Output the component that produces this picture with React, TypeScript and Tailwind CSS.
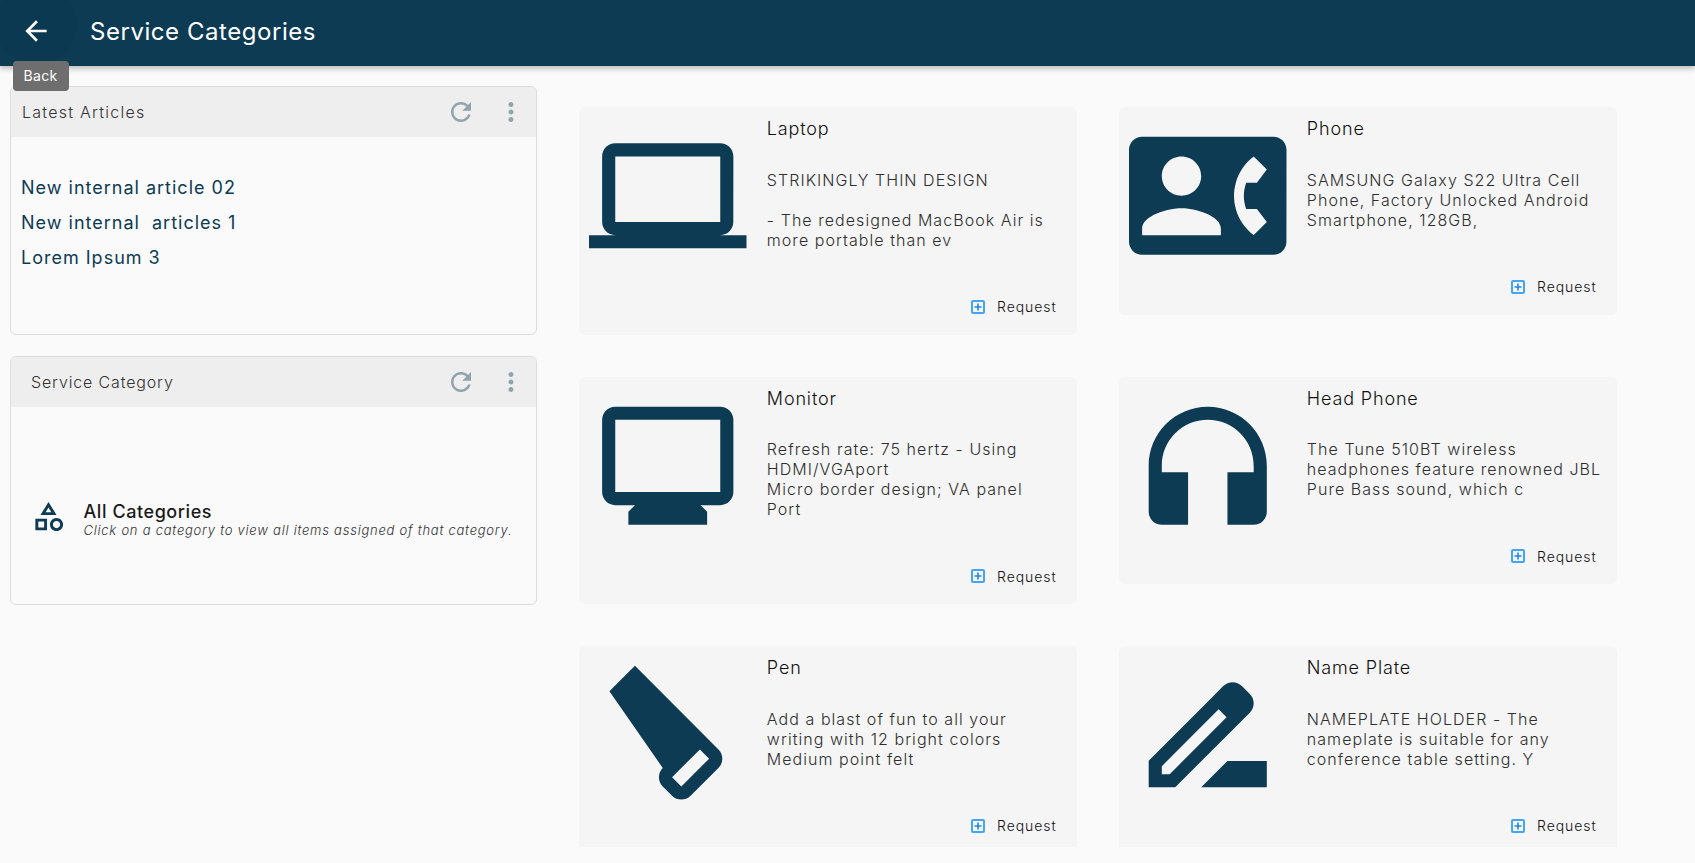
import React from 'react';

const icons: Record<string, string> = {
  laptop:
    'M20 18c1.1 0 1.99-.9 1.99-2L22 6c0-1.1-.9-2-2-2H4c-1.1 0-2 .9-2 2v10c0 1.1.9 2 2 2H0v2h24v-2h-4zM4 6h16v10H4V6z',
  phone:
    'M22 3H2C.9 3 0 3.9 0 5v14c0 1.1.9 2 2 2h20c1.1 0 1.99-.9 1.99-2L24 5c0-1.1-.9-2-2-2zM8 6c1.66 0 3 1.34 3 3s-1.34 3-3 3-3-1.34-3-3 1.34-3 3-3zm6 12H2v-1c0-2 4-3.1 6-3.1s6 1.1 6 3.1v1zm3.85-4h1.64L21 16l-1.99 1.99c-1.31-.98-2.28-2.38-2.73-3.99-.18-.64-.28-1.31-.28-2s.1-1.36.28-2c.45-1.62 1.42-3.01 2.73-3.99L21 8l-1.51 2h-1.64c-.22.63-.35 1.3-.35 2s.13 1.37.35 2z',
  monitor:
    'M20 3H4c-1.1 0-2 .9-2 2v11c0 1.1.9 2 2 2h3l-1 1v2h12v-2l-1-1h3c1.1 0 2-.9 2-2V5c0-1.1-.9-2-2-2zm0 13H4V5h16v11z',
  headphones:
    'M12 3c-4.97 0-9 4.03-9 9v7c0 1.1.9 2 2 2h4v-8H5v-1c0-3.87 3.13-7 7-7s7 3.13 7 7v1h-4v8h4c1.1 0 2-.9 2-2v-7c0-4.97-4.03-9-9-9z',
  carpenter:
    'M19.73 14.23L7 1.5 3.11 5.39l8.13 11.67c-.78.78-.78 2.05 0 2.83l1.41 1.41c.78.78 2.05.78 2.83 0l4.24-4.24c.79-.78.79-2.05.01-2.83zm-5.66 5.65l-1.41-1.41 4.24-4.24 1.41 1.41-4.24 4.24z',
  rename:
    'M18.41 5.8L17.2 4.59c-.78-.78-2.05-.78-2.83 0l-2.68 2.68L3 15.96V20h4.04l8.74-8.74 2.63-2.63c.79-.78.79-2.05 0-2.83zM6.21 18H5v-1.21l8.66-8.66 1.21 1.21L6.21 18zM11 20l4-4h6v4H11z',
  category:
    'M12 2l-5.5 9h11L12 2zm0 3.84L13.93 9h-3.87L12 5.84zM17.5 13c-2.49 0-4.5 2.01-4.5 4.5s2.01 4.5 4.5 4.5 4.5-2.01 4.5-4.5-2.01-4.5-4.5-4.5zm0 7c-1.38 0-2.5-1.12-2.5-2.5s1.12-2.5 2.5-2.5 2.5 1.12 2.5 2.5-1.12 2.5-2.5 2.5zM3 21.5h8v-8H3v8zm2-6h4v4H5v-4z',
  back: 'M20 11H7.83l5.59-5.59L12 4l-8 8 8 8 1.41-1.41L7.83 13H20v-2z',
  refresh:
    'M17.65 6.35C16.2 4.9 14.21 4 12 4c-4.42 0-7.99 3.58-7.99 8s3.57 8 7.99 8c3.73 0 6.84-2.55 7.73-6h-2.08c-.82 2.33-3.04 4-5.65 4-3.31 0-6-2.69-6-6s2.69-6 6-6c1.66 0 3.14.69 4.22 1.78L13 11h7V4l-2.35 2.35z',
  more: 'M12 8c1.1 0 2-.9 2-2s-.9-2-2-2-2 .9-2 2 .9 2 2 2zm0 2c-1.1 0-2 .9-2 2s.9 2 2 2 2-.9 2-2-.9-2-2-2zm0 6c-1.1 0-2 .9-2 2s.9 2 2 2 2-.9 2-2-.9-2-2-2z',
};

const Icon = ({ name, className }: { name: string; className?: string }) => (
  <svg viewBox="0 0 24 24" fill="currentColor" className={className}>
    <path d={icons[name]} />
  </svg>
);

const products = [
  {
    icon: 'laptop',
    title: 'Laptop',
    lines: ['STRIKINGLY THIN DESIGN', '\u00a0', '- The redesigned MacBook Air is', 'more portable than ev'],
  },
  {
    icon: 'phone',
    title: 'Phone',
    lines: ['SAMSUNG Galaxy S22 Ultra Cell', 'Phone, Factory Unlocked Android', 'Smartphone, 128GB,'],
  },
  {
    icon: 'monitor',
    title: 'Monitor',
    lines: ['Refresh rate: 75 hertz - Using', 'HDMI/VGAport', 'Micro border design; VA panel', 'Port'],
  },
  {
    icon: 'headphones',
    title: 'Head Phone',
    lines: ['The Tune 510BT wireless', 'headphones feature renowned JBL', 'Pure Bass sound, which c'],
  },
  {
    icon: 'carpenter',
    title: 'Pen',
    lines: ['Add a blast of fun to all your', 'writing with 12 bright colors', 'Medium point felt'],
  },
  {
    icon: 'rename',
    title: 'Name Plate',
    lines: ['NAMEPLATE HOLDER - The', 'nameplate is suitable for any', 'conference table setting. Y'],
  },
];

const PanelHeader = ({ title, titleClass }: { title: string; titleClass: string }) => (
  <div className="flex h-[50px] items-center justify-between bg-[#eeeeee] pr-[10px]">
    <span className={`text-[16px] font-light text-[#333333] ${titleClass}`}>{title}</span>
    <div className="flex items-center gap-[20px] text-[#90a4ae]">
      <Icon name="refresh" className="h-[30px] w-[30px]" />
      <Icon name="more" className="h-[30px] w-[30px]" />
    </div>
  </div>
);

const ProductCard = ({ product }: { product: (typeof products)[number] }) => (
  <div className="flex rounded-[6px] bg-[#f5f5f5] pl-[10px] pt-[10px]">
    <Icon name={product.icon} className="h-[157.5px] w-[157.5px] shrink-0 text-[#0d3b54]" />
    <div className="ml-[20px] min-w-0 flex-1 pb-[18px] pr-[20px]">
      <h3 className="mt-[1px] text-[18px] font-light leading-[22px] tracking-[0.85px] text-[#111111]">{product.title}</h3>
      <div className="mt-[29.5px] text-[16px] font-light leading-[20px] tracking-[1.05px] text-[#2e2e2e]">
        {product.lines.map((line, i) => (
          <div key={i} className="whitespace-nowrap">
            {line}
          </div>
        ))}
      </div>
      <div className="mt-[47px] flex h-[20px] items-center justify-end gap-[12px]">
        <svg viewBox="0 0 14 14" className="h-[14px] w-[14px]">
          <rect x="1" y="1" width="12" height="12" rx="1" fill="none" stroke="#42a5f5" strokeWidth="2" />
          <path d="M6.2 3.5h1.6v2.7h2.7v1.6H7.8v2.7H6.2V7.8H3.5V6.2h2.7z" fill="#1e88e5" />
        </svg>
        <span className="text-[14px] font-light tracking-[0.95px] text-[#111111]">Request</span>
      </div>
    </div>
  </div>
);

export default function App() {
  return (
    <div className="relative h-[863px] overflow-hidden bg-[#fafafa] font-['Inter','Liberation_Sans',sans-serif]">
      <header className="relative z-10 flex h-[66px] items-center overflow-hidden bg-[#0d3b54] pb-[4px] shadow-[0_2px_6px_rgba(0,0,0,0.3)]">
        <div className="absolute left-[-5px] top-[-17px] h-[82px] w-[82px] rounded-full bg-black/[0.025]" />
        <Icon name="back" className="relative ml-[20px] h-[32px] w-[32px] text-white" />
        <h1 className="ml-[38px] mt-[2px] text-[24px] font-normal tracking-[0.55px] text-white">Service Categories</h1>
      </header>

      <div className="absolute left-[12.5px] top-[61px] z-20 flex h-[30px] w-[56px] items-center justify-center rounded-[4px] bg-[#6e6e6e] pb-[1px] text-[14px] tracking-[0.3px] text-white">
        Back
      </div>

      <div className="flex h-[781px] overflow-hidden">
        <aside className="w-[537px] shrink-0 pl-[10px] pt-[20px]">
          <section className="h-[249px] overflow-hidden rounded-[6px] border border-[#dcdcdc]">
            <PanelHeader title="Latest Articles" titleClass="pl-[11px] tracking-[1.25px]" />
            <ul className="mt-[33px] pl-[10px] text-[18px] font-normal tracking-[1px] text-[#0d3b54]">
              {['New internal article 02', 'New internal  articles 1', 'Lorem Ipsum 3'].map((title) => (
                <li key={title} className="h-[35px] whitespace-pre leading-[35px]">
                  {title}
                </li>
              ))}
            </ul>
          </section>
          <section className="mt-[21px] h-[249px] overflow-hidden rounded-[6px] border border-[#dcdcdc]">
            <PanelHeader title="Service Category" titleClass="pl-[20px] tracking-[0.85px]" />
            <div className="flex h-[198px] items-center pl-[20px] pt-[28px]">
              <Icon name="category" className="mb-[8px] h-[35px] w-[35px] shrink-0 text-[#0d3b54]" />
              <div className="ml-[17.5px]">
                <div className="text-[18px] font-medium leading-[20px] tracking-[0.57px] text-[#1a1a1a]">All Categories</div>
                <div className="text-[13px] font-light italic leading-[16px] tracking-[0.76px] text-[#333333]">
                  Click on a category to view all items assigned of that category.
                </div>
              </div>
            </div>
          </section>
        </aside>

        <main className="grid w-[1080px] grid-cols-[497.33px_497.33px] items-start gap-x-[42.67px] gap-y-[42px] pl-[42.33px] pt-[41.33px]">
          {products.map((product) => (
            <ProductCard key={product.title} product={product} />
          ))}
        </main>
      </div>
    </div>
  );
}
